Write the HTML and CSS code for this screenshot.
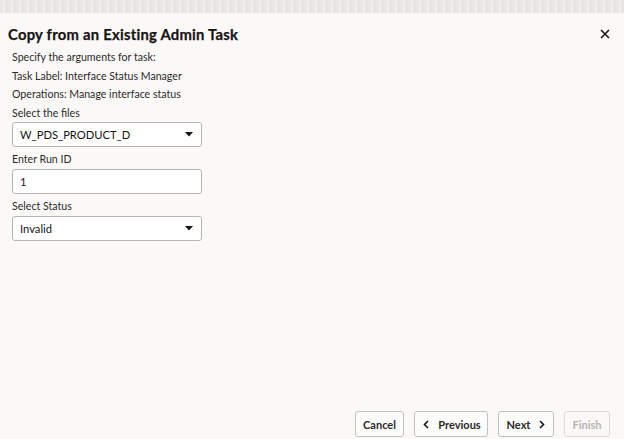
FILE: index.html
```html
<!DOCTYPE html>
<html>
<head>
<meta charset="utf-8">
<link rel="stylesheet" href="styles.css">
</head>
<body>
<div class="strip"></div>
<div class="dialog">
  <div class="header">
    <h1 class="title">Copy from an Existing Admin Task</h1>
    <span class="close">
      <svg width="10" height="10" viewBox="0 0 10 10"><path d="M1 1L9 9M9 1L1 9" stroke="#161513" stroke-width="1.6" fill="none"/></svg>
    </span>
  </div>
  <div class="body">
    <div class="line">Specify the arguments for task:</div>
    <div class="line">Task Label: Interface Status Manager</div>
    <div class="line">Operations: Manage interface status</div>
    <div class="line">Select the files</div>
    <div class="field">
      <span class="value">W_PDS_PRODUCT_D</span>
      <svg class="caret" width="8" height="5" viewBox="0 0 8 5"><path d="M0 0H8L4 4.5Z" fill="#161513"/></svg>
    </div>
    <div class="label">Enter Run ID</div>
    <div class="field">
      <span class="value">1</span>
    </div>
    <div class="label">Select Status</div>
    <div class="field">
      <span class="value">Invalid</span>
      <svg class="caret" width="8" height="5" viewBox="0 0 8 5"><path d="M0 0H8L4 4.5Z" fill="#161513"/></svg>
    </div>
  </div>
  <div class="footer">
    <button class="btn w-cancel">Cancel</button>
    <button class="btn w-prev"><svg class="chev" width="6" height="9" viewBox="0 0 6 9"><path d="M5 1L1.5 4.5L5 8" stroke="#161513" stroke-width="1.6" fill="none"/></svg>Previous</button>
    <button class="btn w-next">Next<svg class="chev" width="6" height="9" viewBox="0 0 6 9"><path d="M1 1L4.5 4.5L1 8" stroke="#161513" stroke-width="1.6" fill="none"/></svg></button>
    <button class="btn w-finish disabled">Finish</button>
  </div>
</div>
</body>
</html>
```
FILE: styles.css
```css
html, body {
  margin: 0;
  padding: 0;
  background: #fbf9f8;
  font-family: "Lato", "Noto Sans", sans-serif;
  color: #161513;
}
.strip {
  height: 13px;
  background: repeating-linear-gradient(90deg, #e9e8e7 0 3px, #efeeed 3px 5px, #e6e5e4 5px 8px);
}
.dialog {
  height: 426px;
  display: flex;
  flex-direction: column;
}
.header {
  display: flex;
  align-items: center;
  justify-content: space-between;
  padding: 11px 14px 0 8px;
  height: 20px;
}
.title {
  margin: 0;
  font-size: 14.8px;
  font-weight: 700;
  letter-spacing: 0.25px;
  -webkit-text-stroke: 0.25px #161513;
}
.close {
  display: flex;
}
.body {
  padding: 4px 12px 0 12px;
  flex: 1;
  font-size: 10.6px;
}
.line {
  height: 18.5px;
  line-height: 18.5px;
  color: #2b2a28;
}
.label {
  height: 22px;
  line-height: 25px;
  color: #2b2a28;
}
.field {
  box-sizing: border-box;
  width: 190px;
  height: 25px;
  border: 1px solid #b8b6b3;
  border-radius: 3px;
  background: #fff;
  display: flex;
  align-items: center;
  justify-content: space-between;
  padding: 0 8px 0 7px;
  font-size: 11.2px;
  color: #161513;
}
.footer {
  display: flex;
  justify-content: flex-end;
  gap: 10px;
  padding: 0 14px 2px 0;
}
.btn {
  box-sizing: border-box;
  height: 26px;
  border: 1px solid #c4c2bf;
  border-radius: 3px;
  background: #fcfcfb;
  font-family: inherit;
  font-size: 11px;
  font-weight: 700;
  color: #2b2a28;
  padding: 0;
  display: flex;
  align-items: center;
  justify-content: center;
  gap: 8px;
}
.w-cancel { width: 49px; }
.w-prev { width: 74px; gap: 9px; padding-left: 2px; }
.w-next { width: 56px; gap: 9px; }
.w-finish { width: 46px; }
.btn.disabled {
  color: #b5b3b0;
  border-color: #dcdad7;
  background: #faf9f8;
}
```
